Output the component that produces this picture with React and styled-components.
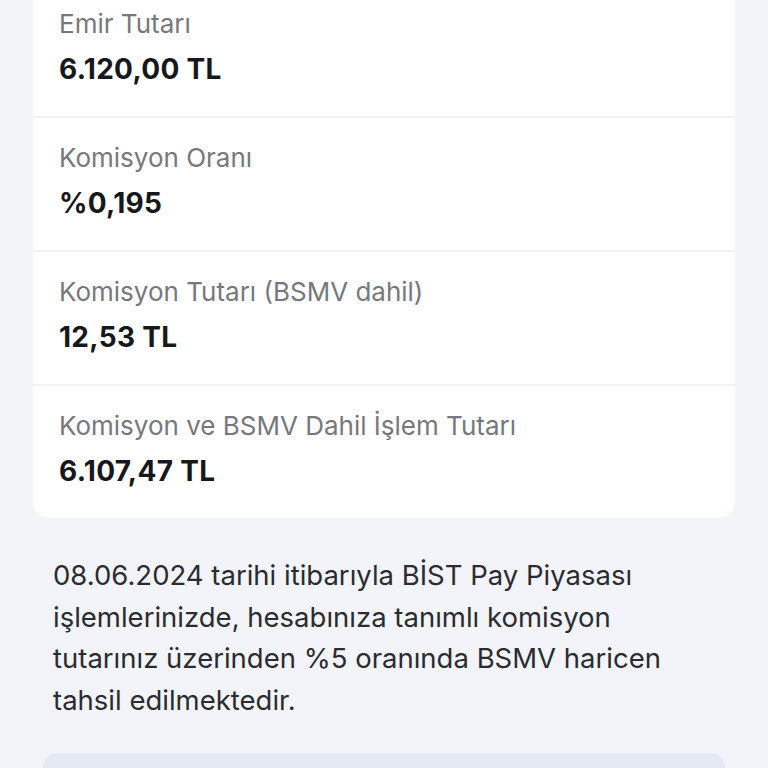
import React from 'react'
import styled, { createGlobalStyle } from 'styled-components'

const GlobalStyle = createGlobalStyle`
    html, body {
        margin: 0;
        padding: 0;
        background: #f3f4f9;
        font-family: Inter, "Noto Sans", sans-serif;
    }
`

const Page = styled.div`
    width: 768px;
    height: 768px;
    overflow: hidden;
    display: flex;
    flex-direction: column;
`
const Card = styled.div`
    margin: -16px 33px 0 33px;
    background-color: #ffffff;
    border-radius: 16px;
    display: flex;
    flex-direction: column;
`
const Row = styled.div`
    display: flex;
    flex-direction: column;
    gap: 12px;
    padding: 24px 26px 30px 26px;
    border-top: ${props => props.first ? 'none' : '2px solid #f2f3f7'};
`
const Label = styled.span`
    font-size: 26px;
    line-height: 32px;
    color: #76787e;
    letter-spacing: 0;
`
const Value = styled.span`
    font-size: 28px;
    line-height: 34px;
    font-weight: 700;
    color: #16181c;
    letter-spacing: 0.3px;
`
const Note = styled.p`
    margin: 37px 80px 0 53px;
    font-size: 27.5px;
    line-height: 41.5px;
    color: #2a2c31;
    letter-spacing: 0;
`
const InfoBox = styled.div`
    margin: 32px 43px 0 43px;
    height: 80px;
    flex-shrink: 0;
    border-radius: 14px;
    background-color: #e5e9f3;
`

const rows = [
    { label: 'Emir Tutarı', value: '6.120,00 TL' },
    { label: 'Komisyon Oranı', value: '%0,195' },
    { label: 'Komisyon Tutarı (BSMV dahil)', value: '12,53 TL' },
    { label: 'Komisyon ve BSMV Dahil İşlem Tutarı', value: '6.107,47 TL' },
]

const App = () => {
  return (
    <Page>
        <GlobalStyle />
        <Card>
            {rows.map((r, i) => (
                <Row key={r.label} first={i === 0}>
                    <Label>{r.label}</Label>
                    <Value>{r.value}</Value>
                </Row>
            ))}
        </Card>
        <Note>
            08.06.2024 tarihi itibarıyla BİST Pay Piyasası işlemlerinizde, hesabınıza tanımlı komisyon tutarınız üzerinden %5 oranında BSMV haricen tahsil edilmektedir.
        </Note>
        <InfoBox />
    </Page>
  )
}

export default App
